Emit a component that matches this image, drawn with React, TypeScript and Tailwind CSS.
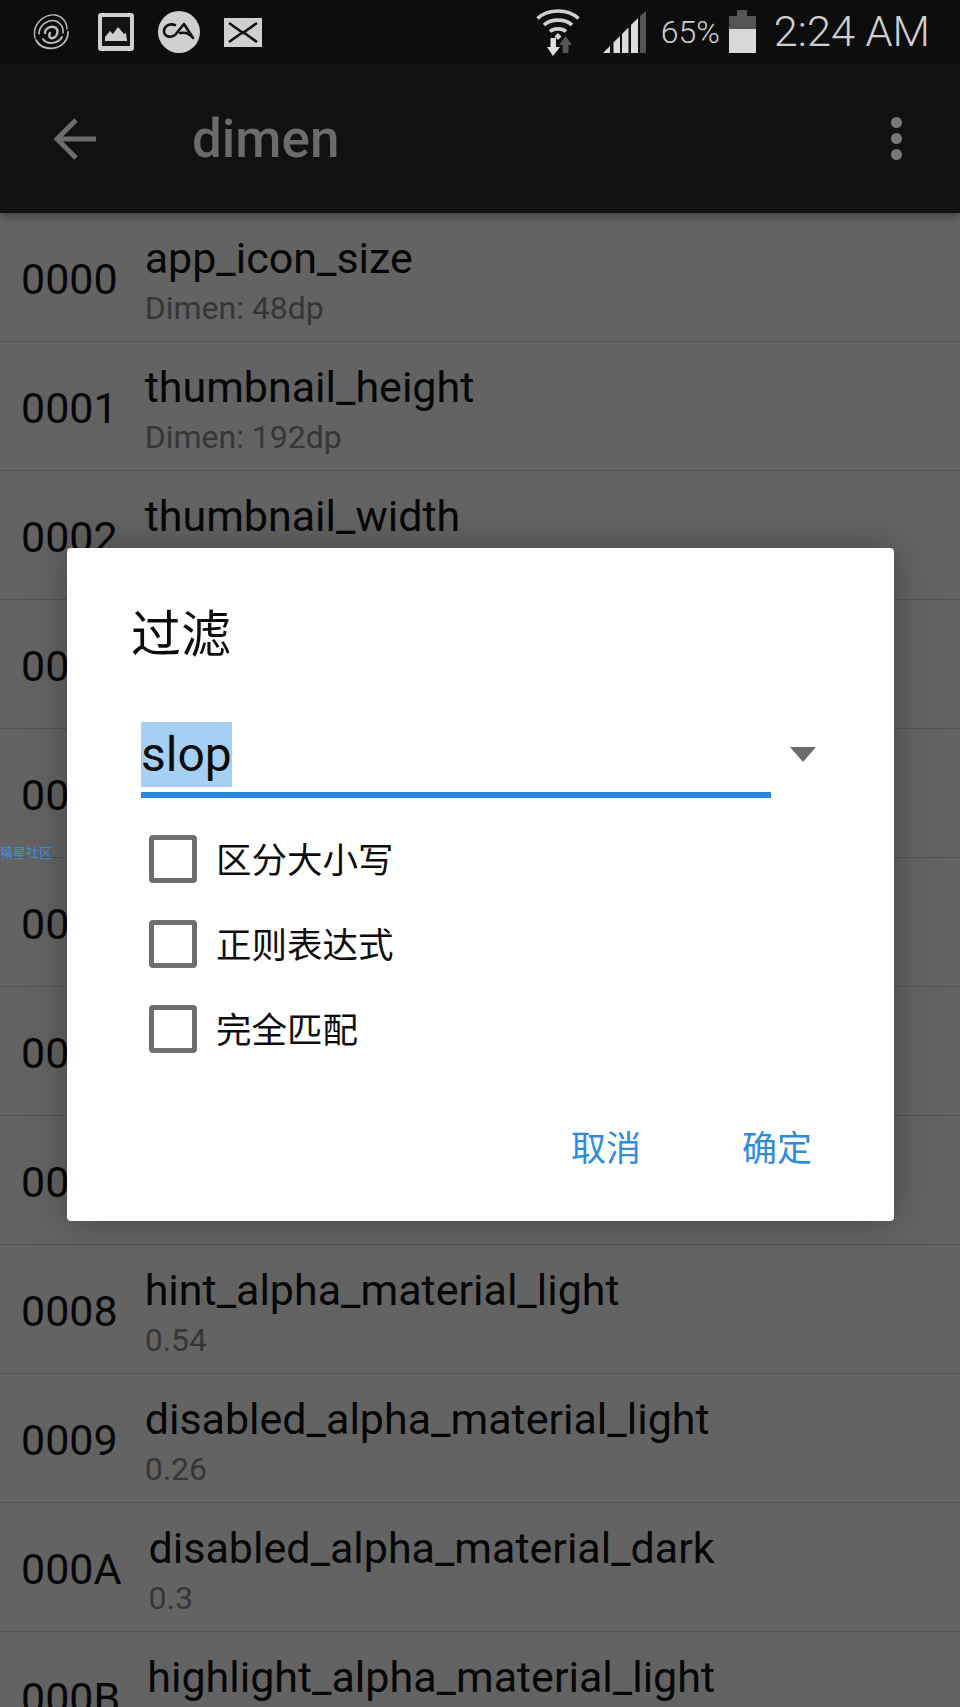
import React from "react";

const rows: { id: string; title?: string; sub?: string }[] = [
  { id: "0000", title: "app_icon_size", sub: "Dimen: 48dp" },
  { id: "0001", title: "thumbnail_height", sub: "Dimen: 192dp" },
  { id: "0002", title: "thumbnail_width", sub: "Dimen: 192dp" },
  { id: "0003" },
  { id: "0004" },
  { id: "0005" },
  { id: "0006" },
  { id: "0007" },
  { id: "0008", title: "hint_alpha_material_light", sub: "0.54" },
  { id: "0009", title: "disabled_alpha_material_light", sub: "0.26" },
  { id: "000A", title: "disabled_alpha_material_dark", sub: "0.3" },
  { id: "000B", title: "highlight_alpha_material_light", sub: "0.12" },
];

function Swirl() {
  return (
    <svg width="36" height="38" viewBox="0 0 36 38" fill="none" stroke="#bdbdbd" strokeLinecap="round">
      <path strokeWidth="1.4" d="M2 25C-1 12 10 1 22 2C29 3 34 9 34 16" />
      <path strokeWidth="1.8" d="M35 19C35 30 25 37 14 35C8 34 5 31 3 27" />
      <path strokeWidth="1.6" d="M6 21C6 12 15 6 23 8C28 10 31 15 30 20" />
      <path strokeWidth="2" d="M29 24C25 31 14 32 10 26" />
      <path strokeWidth="2.4" d="M12 20C12 15 19 12 23 15C26 18 24 24 20 25C17 26 15 23 17 20" />
    </svg>
  );
}

function PictureIcon() {
  return (
    <svg width="36" height="38" viewBox="0 0 36 38">
      <rect x="0" y="0" width="36" height="38" rx="3" fill="#cfcfcf" />
      <rect x="4" y="4" width="28" height="29" fill="#141414" />
      <path d="M7 28V24L12 18L15 21L20 14L26 21L28 20L29 28Z" fill="#cfcfcf" />
    </svg>
  );
}

function CircleIcon() {
  return (
    <svg width="42" height="42" viewBox="0 0 42 42" fill="none">
      <circle cx="21" cy="21" r="21" fill="#d0d0d0" />
      <path
        d="M17 14C12 12 6 15 6 20C6 26 13 27 17 24L26 13L35 27C32 23 27 21 22 22"
        stroke="#111"
        strokeWidth="2.6"
        strokeLinecap="round"
        strokeLinejoin="round"
      />
    </svg>
  );
}

function MailIcon() {
  return (
    <svg width="38" height="29" viewBox="0 0 38 29" fill="none">
      <rect width="38" height="29" fill="#d0d0d0" />
      <path d="M5 5L19 15L33 5M5 24L19 14L33 24" stroke="#111" strokeWidth="2.6" />
    </svg>
  );
}

function Wifi() {
  return (
    <svg width="44" height="47" viewBox="0 0 44 47" fill="none">
      <g stroke="#cfcfcf" strokeWidth="3.6">
        <path d="M1.5 9.5C12 -0.5 32 -0.5 42.5 9.5" />
        <path d="M8 16C15 9.5 29 9.5 36 16" />
        <path d="M14 22.5C18 19 26 19 30 22.5" />
      </g>
      <path d="M18.5 27.5L22 24L25.5 27.5L22 31Z" fill="#cfcfcf" />
      <path d="M29.5 27L36 36H32.5V44H26.5V36H23Z" fill="#555" />
      <path d="M14.5 29H20V38H24L17 47L11 38H14.5Z" fill="#e0e0e0" />
    </svg>
  );
}

function Signal() {
  return (
    <svg width="43" height="42" viewBox="0 0 43 42">
      <path d="M0 42L7 35V42Z" fill="#dcdcdc" />
      <path d="M10.5 31.5L17 25V42H10.5Z" fill="#dcdcdc" />
      <path d="M19 23L25.5 16.5V42H19Z" fill="#dcdcdc" />
      <path d="M28 14L35 7V42H28Z" fill="#dcdcdc" />
      <path d="M37 5L43 0V42H37Z" fill="#555" />
    </svg>
  );
}

function Battery() {
  return (
    <svg width="27" height="43" viewBox="0 0 27 43">
      <rect x="8" y="0" width="10" height="7" fill="#555" />
      <rect x="0" y="6" width="27" height="13" fill="#555" />
      <rect x="0" y="19" width="27" height="24" fill="#d8d8d8" />
    </svg>
  );
}

function CheckRow({ label }: { label: string }) {
  return (
    <div className="flex items-center h-[48px] mb-[37px] ml-[82px]">
      <div className="w-[48px] h-[48px] border-[5px] border-[#6e6e6e] rounded-[4px] bg-white" />
      <span className="ml-[19px] pt-[3px] text-[35.5px] leading-[48px] text-[#0c0c0c]">{label}</span>
    </div>
  );
}

export default function App() {
  return (
    <div className="relative w-[960px] h-[1707px] overflow-hidden bg-[#636363] [font-family:Roboto,'Noto_Sans_CJK_SC',sans-serif]">
      <div className="flex items-center h-[64px] bg-[#0d0d0d]">
        <div className="ml-[33px]"><Swirl /></div>
        <div className="ml-[29px]"><PictureIcon /></div>
        <div className="ml-[24px]"><CircleIcon /></div>
        <div className="ml-[24px]"><MailIcon /></div>
        <div className="ml-auto"><Wifi /></div>
        <div className="ml-[23px]"><Signal /></div>
        <span className="ml-[15px] w-[60px] text-[32px] leading-[40px] font-light text-[#cfcfcf] whitespace-nowrap">65%</span>
        <div className="ml-[8px] -mt-[1px]"><Battery /></div>
        <span className="ml-[18px] mr-[30px] text-[43.3px] leading-[50px] font-light text-[#cfcfcf] whitespace-nowrap">2:24 AM</span>
      </div>

      <div className="relative z-10 flex items-center h-[149px] bg-[#111111] shadow-[0_3px_8px_rgba(0,0,0,0.35)]">
        <svg className="ml-[54px]" width="42" height="42" viewBox="0 0 42 42" fill="none" stroke="#6c6c6c" strokeWidth="5">
          <path d="M42 21H4M22 2L3 21L22 40" />
        </svg>
        <span className="ml-[96px] text-[53px] leading-[60px] font-medium text-[#6b6b6b]">dimen</span>
        <div className="ml-auto mr-[58px] flex flex-col gap-[5px]">
          <div className="w-[11px] h-[11px] rounded-full bg-[#777]" />
          <div className="w-[11px] h-[11px] rounded-full bg-[#777]" />
          <div className="w-[11px] h-[11px] rounded-full bg-[#777]" />
        </div>
      </div>

      <div>
        {rows.map((r) => (
          <div key={r.id} className="flex items-center h-[129px] shrink-0 border-b border-[#525252] pl-[21px]">
            <span className="pt-[3px] text-[43px] leading-[50px] text-[#060606]">{r.id}</span>
            <div className="ml-[27px] flex flex-col self-start pt-[21px]">
              <span className="text-[43px] leading-[48px] text-[#060606] whitespace-nowrap">{r.title}</span>
              <span className="mt-[6px] text-[32px] leading-[40px] text-[#363636]">{r.sub}</span>
            </div>
          </div>
        ))}
      </div>

      <span className="absolute left-0 top-[845px] text-[13px] leading-[16px] text-[#3f8fdc] whitespace-nowrap">猿星社区</span>

      <div className="absolute left-[67px] top-[548px] w-[827px] h-[673px] flex flex-col bg-white rounded-[4px] shadow-[0_0_40px_rgba(0,0,0,0.3)]">
        <div className="ml-[64px] mt-[57px] text-[50px] leading-[60px] text-[#0c0c0c]">过滤</div>
        <div className="flex items-start mt-[57px] ml-[74px] h-[76px]">
          <div className="w-[630px] h-[76px] border-b-[6px] border-[#2a86d8]">
            <span className="inline-block h-[65px] bg-[#a5cff3] text-[#0c0c0c] text-[48px] leading-[65px]">slop</span>
          </div>
          <svg className="ml-[19px] mt-[25px]" width="26" height="15" viewBox="0 0 26 15">
            <path d="M0 0H26L13 15Z" fill="#6a6a6a" />
          </svg>
        </div>
        <div className="mt-[37px]">
          <CheckRow label="区分大小写" />
          <CheckRow label="正则表达式" />
          <CheckRow label="完全匹配" />
        </div>
        <div className="flex justify-end mt-[36px] mr-[82px] gap-[101px] text-[35px] leading-[48px] text-[#2f8bdc]">
          <span>取消</span>
          <span>确定</span>
        </div>
      </div>
    </div>
  );
}
